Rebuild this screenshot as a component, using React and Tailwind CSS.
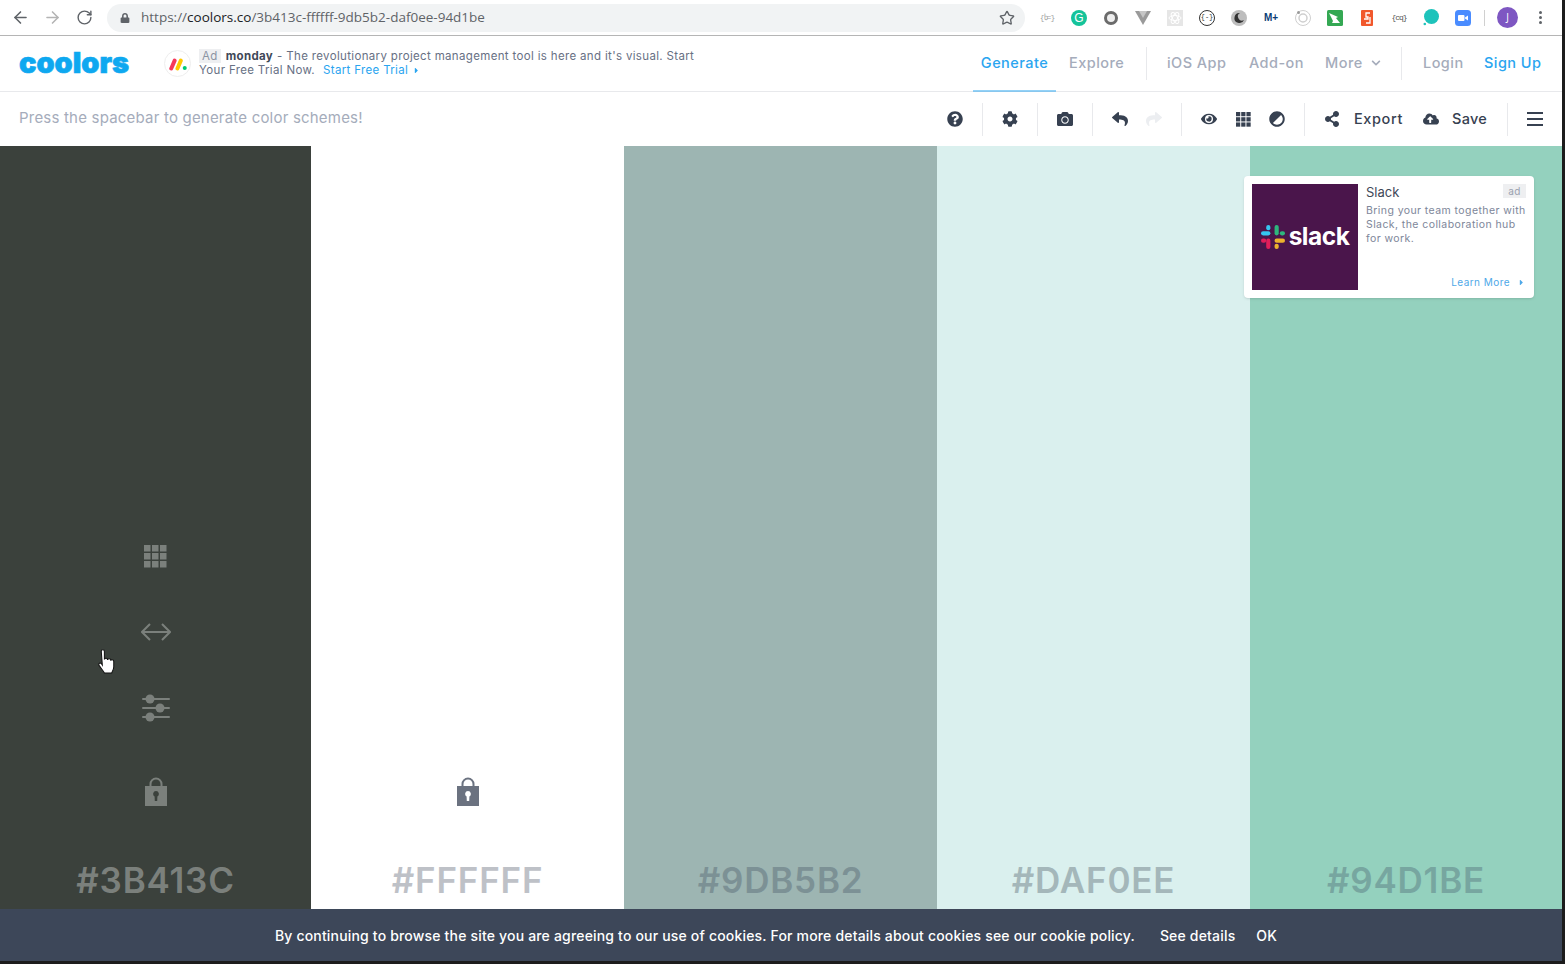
import React from 'react';
import { ArrowLeft, ArrowRight, RotateCw, Star } from 'lucide-react';
import {
  FaQuestionCircle, FaCog, FaCamera, FaReply, FaShare, FaEye, FaAdjust,
  FaShareAlt, FaCloudUploadAlt, FaChevronDown, FaCaretRight, FaLock,
} from 'react-icons/fa';

function Grid({ size, color }) {
  const cells = [0, 1, 2, 3, 4, 5, 6, 7, 8];
  return (
    <svg width={size} height={size} viewBox="0 0 23 23" fill={color}>
      {cells.map(i => (
        <rect key={i} x={(i % 3) * 8} y={Math.floor(i / 3) * 8} width="6.500" height="6.500" />
      ))}
    </svg>
  );
}

function PadLock({ color }) {
  return (
    <svg width="24" height="30" viewBox="0 0 24 30">
      <path d="M6.500 12V8a5.500 5.500 0 0 1 11 0v4" fill="none" stroke={color} strokeWidth="2" />
      <path fillRule="evenodd" fill={color} d="M1 10h22v20H1z M12 15a3 3 0 0 0-1.400 5.600L10.800 25h2.400l.2-4.400A3 3 0 0 0 12 15z" />
    </svg>
  );
}

function Sliders() {
  return (
    <svg width="28" height="28" viewBox="0 0 28 28" fill="#7b807c">
      <rect x="0" y="4" width="28" height="2" rx="1" />
      <rect x="0" y="13" width="28" height="2" rx="1" />
      <rect x="0" y="22" width="28" height="2" rx="1" />
      <circle cx="8" cy="5" r="4.500" /><circle cx="18" cy="14" r="4.500" /><circle cx="8" cy="23" r="4.500" />
    </svg>
  );
}

function Arrows() {
  return (
    <svg width="30" height="18" viewBox="0 0 30 18" fill="none" stroke="#7b807c" strokeWidth="2">
      <path d="M1 9h28M9 1 1 9l8 8M21 1l8 8-8 8" />
    </svg>
  );
}

function Column({ bg, width, hex, text, children }) {
  return (
    <div className={`${bg} ${width} shrink-0 h-full flex flex-col items-center justify-end`}>
      {children}
      <div className={`${text} h-[58px] text-[35px] font-semibold tracking-[0.8px] leading-none flex items-center`}>{hex}</div>
    </div>
  );
}

function Cursor() {
  return (
    <svg className="absolute left-[98px] top-[503px]" width="18" height="26" viewBox="0 0 17 25">
      <path d="M3 2.500c0-2.500 3-2.500 3 0v7.500c.5-1.500 3-1.500 3 .5.500-1.500 3-1.500 3 .5.500-1 3-1 3 1v5c0 2.500-1 4-2 6H6c-1-2-3-4-5-7-1-1.500.5-3.500 2-2l1 1.500z" fill="#fff" stroke="#111" strokeWidth="1" />
    </svg>
  );
}

function ExtBar() {
  return (
    <div className="flex items-center">
      <div className="w-[32px] flex justify-center font-['Liberation_Mono'] text-[8px] text-[#a3a3a3] tracking-[-1px]">{'{ხ=}'}</div>
      <div className="w-[32px] flex justify-center">
        <div className="w-[16px] h-[16px] rounded-full bg-[#15c39a] flex items-center justify-center text-[12px] text-white font-['Liberation_Sans']">G</div>
      </div>
      <div className="w-[32px] flex justify-center">
        <div className="w-[14px] h-[14px] rounded-full border-[3px] border-[#6b6b6b] bg-[#eee]" />
      </div>
      <div className="w-[32px] flex justify-center">
        <svg width="16" height="14" viewBox="0 0 16 14"><path d="M0 0h16L8 14z" fill="#9a9a9a" /><path d="M4 0h8L8 7z" fill="#c6c6c6" /></svg>
      </div>
      <div className="w-[32px] flex justify-center">
        <svg width="16" height="16" viewBox="0 0 16 16"><rect width="16" height="16" fill="#e6e6e6" /><g fill="none" stroke="#fff"><ellipse cx="8" cy="8" rx="6" ry="2.500" /><ellipse cx="8" cy="8" rx="6" ry="2.500" transform="rotate(60 8 8)" /><ellipse cx="8" cy="8" rx="6" ry="2.500" transform="rotate(120 8 8)" /></g></svg>
      </div>
      <div className="w-[32px] flex justify-center">
        <div className="w-[16px] h-[16px] rounded-full border border-[#333] flex items-center justify-center text-[7px] text-[#333] font-['Liberation_Mono']">{'{-}'}</div>
      </div>
      <div className="w-[32px] flex justify-center">
        <svg width="16" height="16" viewBox="0 0 16 16"><circle cx="8" cy="8" r="8" fill="#bdbdbd" /><path d="M9 3a5 5 0 1 0 4 7 4 4 0 0 1-4-7z" fill="#333" /></svg>
      </div>
      <div className="w-[32px] flex justify-center text-[10px] font-bold text-[#0b3d77] font-['Liberation_Sans']">M+</div>
      <div className="w-[32px] flex justify-center">
        <svg width="16" height="16" viewBox="0 0 16 16" fill="none" stroke="#cfcfcf"><circle cx="8" cy="8" r="7.500" /><circle cx="8" cy="8" r="4" strokeWidth="1.500" /><circle cx="3.500" cy="2.500" r="1.500" fill="#9a9a9a" stroke="none" /></svg>
      </div>
      <div className="w-[32px] flex justify-center">
        <svg width="16" height="16" viewBox="0 0 16 16"><rect width="16" height="16" rx="1.500" fill="#34a853" /><path d="M2 3l9 4-2 1 4 5H5l1-2-4-8z" fill="#fff" /></svg>
      </div>
      <div className="w-[32px] flex justify-center">
        <svg width="12" height="16" viewBox="0 0 12 16"><rect width="12" height="16" rx="1" fill="#f1582c" /><path d="M9 3H5v4h2v2H3M9 7v6H5" fill="none" stroke="#fff" strokeWidth="1.300" /></svg>
      </div>
      <div className="w-[32px] flex justify-center font-['Liberation_Mono'] text-[8px] text-[#555] tracking-[-1px]">{'{cq}'}</div>
      <div className="w-[32px] flex justify-center">
        <svg width="16" height="17" viewBox="0 0 16 17"><circle cx="8.500" cy="7.500" r="7.500" fill="#1ec3bb" /><circle cx="1.800" cy="15" r="1.300" fill="#1ec3bb" /></svg>
      </div>
      <div className="w-[32px] flex justify-center">
        <svg width="16" height="16" viewBox="0 0 16 16"><rect width="16" height="16" rx="3.500" fill="#4a8cff" /><rect x="3" y="5" width="6.500" height="6" rx="1" fill="#fff" /><path d="M10 7.500 13 5.500v5L10 8.500z" fill="#fff" /></svg>
      </div>
    </div>
  );
}

function SlackLogo() {
  return (
    <svg width="24" height="24" viewBox="0 0 23 23">
      <rect x="0" y="6" width="9" height="4" rx="2" fill="#36c5f0" />
      <rect x="5" y="0" width="4" height="5" rx="2" fill="#36c5f0" />
      <rect x="13" y="0" width="4" height="10" rx="2" fill="#2eb67d" />
      <rect x="18" y="6" width="5" height="4" rx="2" fill="#2eb67d" />
      <rect x="13" y="13" width="10" height="4" rx="2" fill="#ecb22e" />
      <rect x="13" y="18" width="4" height="5" rx="2" fill="#ecb22e" />
      <rect x="5" y="13" width="4" height="10" rx="2" fill="#e01e5a" />
      <rect x="0" y="13" width="5" height="4" rx="2" fill="#e01e5a" />
    </svg>
  );
}

function App() {
  return (
    <div className="font-['Inter',sans-serif] h-screen w-full bg-[#1c1c1c] overflow-hidden">
      <div className="w-[1562px] h-full flex flex-col relative">
        {/* Browser chrome */}
        <div className="h-[36px] shrink-0 bg-white border-b border-[#b5b5b5] flex items-center pl-[11px] font-['Open_Sans']">
          <ArrowLeft size={19} strokeWidth={2} className="text-[#5f6368]" />
          <ArrowRight size={19} strokeWidth={2} className="text-[#b4b4b4] ml-[13px]" />
          <RotateCw size={17} strokeWidth={2} className="text-[#5f6368] ml-[14px]" />
          <div className="ml-[14px] w-[918px] h-[28px] rounded-full bg-[#f1f3f4] flex items-center pl-[13px] pr-[10px] text-[13.500px]">
            <FaLock size={10} className="text-[#5f6368]" />
            <div className="ml-[11px] flex-1 text-[#5f6368]">https://<span className="text-[#202124]">coolors.co</span>/3b413c-ffffff-9db5b2-daf0ee-94d1be</div>
            <Star size={16} strokeWidth={2} className="text-[#5f6368]" />
          </div>
          <div className="ml-[6px]"><ExtBar /></div>
          <div className="ml-[5px] w-px h-[16px] bg-[#d0d0d0]" />
          <div className="ml-[12px] w-[21px] h-[21px] rounded-full bg-[#7e57c2] text-white text-[10px] flex items-center justify-center">J</div>
          <div className="ml-[21px] flex flex-col gap-[2px]">
            <div className="w-[3px] h-[3px] rounded-full bg-[#5f6368]" />
            <div className="w-[3px] h-[3px] rounded-full bg-[#5f6368]" />
            <div className="w-[3px] h-[3px] rounded-full bg-[#5f6368]" />
          </div>
        </div>

        {/* Site nav */}
        <div className="h-[56px] shrink-0 bg-white border-b border-[#e8e9ec] flex items-center pl-[19px] pr-[20px]">
          <div className="w-[145px] text-[#0ea8f0] text-[29px] font-black leading-none pb-[3px] [-webkit-text-stroke:0.7px_#0ea8f0]">coolors</div>
          <div className="w-[27px] h-[27px] rounded-full border border-[#eee] flex items-center justify-center">
            <svg width="18" height="14" viewBox="0 0 16 12">
              <path d="M2 10 5 3" stroke="#f6385a" strokeWidth="3.500" strokeLinecap="round" />
              <path d="M7.500 10l3-7" stroke="#ffc800" strokeWidth="3.500" strokeLinecap="round" />
              <circle cx="14" cy="9.500" r="1.800" fill="#00ca72" />
            </svg>
          </div>
          <div className="ml-[8px] text-[11.500px] leading-[14px] text-[#677084] tracking-[0.34px] -mt-[1px] whitespace-nowrap">
            <div className="flex">
              <span className="bg-[#eeeff1] text-[#8b93a3] px-[3px] mr-[5px]">Ad</span>
              <span className="font-bold text-[#3f4858]">monday</span>
              <span className="ml-[4px]">- The revolutionary project management tool is here and it's visual. Start</span>
            </div>
            <div className="flex items-center">
              <span>Your Free Trial Now.</span>
              <span className="text-[#2aa5f0] ml-[8px]">Start Free Trial</span>
              <FaCaretRight size={9} className="ml-[4px] text-[#2aa5f0]" />
            </div>
          </div>
          <div className="flex-1" />
          <div className="flex items-center text-[14.500px] font-medium tracking-[0.45px] text-[#a5acbb] h-full whitespace-nowrap">
            <div className="h-full w-[83px] pb-[2px] flex items-center justify-center text-[#2aa5f0] border-b border-[#2aa5f0] translate-y-[0.5px]">Generate</div>
            <div className="ml-[13px] w-[56px] -mt-[2px]">Explore</div>
            <div className="ml-[21px] w-px h-[33px] bg-[#e8e9ec]" />
            <div className="ml-[20px] w-[61px] -mt-[2px]">iOS App</div>
            <div className="ml-[21px] w-[55px] -mt-[2px]">Add-on</div>
            <div className="ml-[21px] w-[37px] -mt-[2px]">More</div>
            <FaChevronDown size={10} className="ml-[9px] -mt-[2px]" />
            <div className="ml-[20px] w-px h-[33px] bg-[#e8e9ec]" />
            <div className="ml-[21px] w-[40px] -mt-[2px]">Login</div>
            <div className="ml-[21px] w-[58px] -mt-[2px] text-[#2aa5f0]">Sign Up</div>
          </div>
        </div>

        {/* Toolbar */}
        <div className="h-[54px] shrink-0 bg-white flex items-center pl-[19px] pr-[19px]">
          <div className="flex-1 text-[15px] tracking-[0.2px] text-[#a5acbb] -mt-[2px]">Press the spacebar to generate color schemes!</div>
          <div className="flex items-center text-[#374151]">
            <FaQuestionCircle size={16} />
            <div className="ml-[19px] w-px h-[33px] bg-[#e8e9ec]" />
            <FaCog size={16} className="ml-[19px]" />
            <div className="ml-[19px] w-px h-[33px] bg-[#e8e9ec]" />
            <FaCamera size={16} className="ml-[19px]" />
            <div className="ml-[19px] w-px h-[33px] bg-[#e8e9ec]" />
            <FaReply size={16} className="ml-[19px]" />
            <FaShare size={16} className="ml-[18px] text-[#eceef1]" />
            <div className="ml-[19px] w-px h-[33px] bg-[#e8e9ec]" />
            <FaEye size={16} className="ml-[19px]" />
            <div className="ml-[18px] w-[16px] flex justify-center"><Grid size={15} color="#374151" /></div>
            <FaAdjust size={16} className="ml-[18px] rotate-45" />
            <div className="ml-[19px] w-px h-[33px] bg-[#e8e9ec]" />
            <FaShareAlt size={16} className="ml-[19px]" />
            <div className="ml-[14px] w-[49px] text-[14.500px] font-medium tracking-[0.6px] whitespace-nowrap">Export</div>
            <FaCloudUploadAlt size={16} className="ml-[20px]" />
            <div className="ml-[13px] w-[35px] text-[14.500px] font-medium tracking-[0.3px] whitespace-nowrap">Save</div>
            <div className="ml-[20px] w-px h-[33px] bg-[#e8e9ec]" />
            <div className="ml-[19px] w-[16px] flex flex-col gap-[4px]">
              <div className="h-[2px] bg-[#374151]" />
              <div className="h-[2px] bg-[#374151]" />
              <div className="h-[2px] bg-[#374151]" />
            </div>
          </div>
        </div>

        {/* Palette */}
        <div className="flex-1 min-h-0 flex relative">
          <Column bg="bg-[#3b413c]" width="w-[311px]" hex="#3B413C" text="text-[#7b807c]">
            <div className="mb-[55px] h-[23px]"><Grid size={23} color="#7b807c" /></div>
            <div className="mb-[53px] h-[18px]"><Arrows /></div>
            <div className="mb-[54px] h-[28px]"><Sliders /></div>
            <div className="mb-[45px] h-[30px]"><PadLock color="#7b807c" /></div>
          </Column>
          <Column bg="bg-white" width="w-[313px]" hex="#FFFFFF" text="text-[#bec1c7]">
            <div className="mb-[45px] h-[30px]"><PadLock color="#6b7280" /></div>
          </Column>
          <Column bg="bg-[#9db5b2]" width="w-[313px]" hex="#9DB5B2" text="text-[#7c9195]" />
          <Column bg="bg-[#daf0ee]" width="w-[313px]" hex="#DAF0EE" text="text-[#a4b7ba]" />
          <Column bg="bg-[#94d1be]" width="w-[312px]" hex="#94D1BE" text="text-[#77a6a0]" />

          {/* Slack ad */}
          <div className="absolute left-[1244px] top-[30px] w-[290px] h-[122px] bg-white rounded-[4px] p-[8px] flex shadow-sm">
            <div className="w-[106px] h-[106px] shrink-0 bg-[#4a154b] flex items-center justify-center gap-[4px]">
              <SlackLogo />
              <span className="text-white text-[24.500px] font-bold tracking-[-0.5px] leading-none pb-[2px]">slack</span>
            </div>
            <div className="ml-[8px] flex-1 relative">
              <div className="text-[13px] text-[#3f4858] leading-[18px] -mt-[1px]">Slack</div>
              <div className="text-[10.500px] leading-[14px] tracking-[0.42px] text-[#7d8699] mt-[3px]">Bring your team together with Slack, the collaboration hub for work.</div>
              <div className="absolute right-0 top-0 bg-[#eeeff1] text-[#9aa1af] text-[10px] leading-[14px] px-[5px] tracking-[0.5px]">ad</div>
              <div className="absolute right-0 bottom-[1px] flex items-center text-[10px] leading-[14px] tracking-[0.45px] text-[#4ea8e8]">Learn More<FaCaretRight size={9} className="ml-[7px]" /></div>
            </div>
          </div>
          <Cursor />
        </div>

        {/* Cookie banner */}
        <div className="h-[52px] shrink-0 mb-[3px] bg-[#3d4759] flex items-center justify-center text-white text-[14px] font-medium tracking-[0.18px] pr-[10px] whitespace-nowrap">
          <span>By continuing to browse the site you are agreeing to our use of cookies. For more details about cookies see our cookie policy.</span>
          <span className="ml-[25px]">See details</span>
          <span className="ml-[21px]">OK</span>
        </div>
      </div>
    </div>
  );
}

export default App;
